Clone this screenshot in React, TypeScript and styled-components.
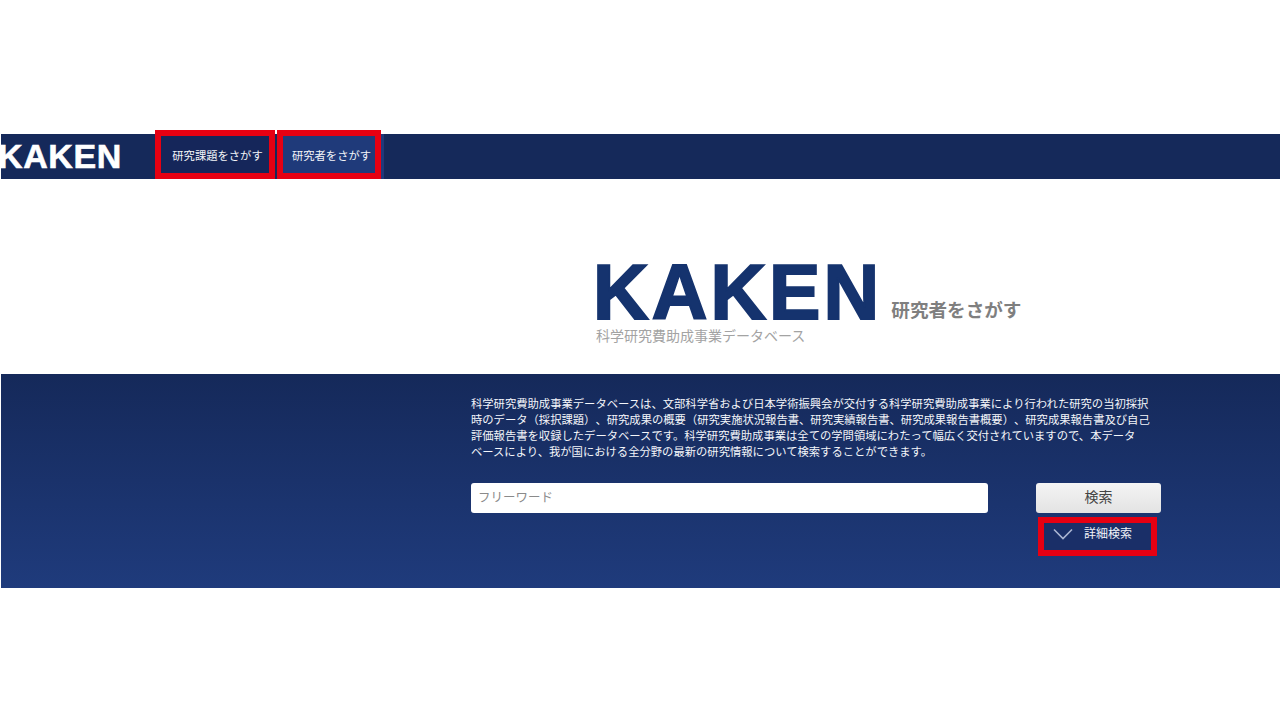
import React from 'react';
import styled, { createGlobalStyle } from 'styled-components';

const GlobalStyle = createGlobalStyle`
  html, body {
    margin: 0;
    padding: 0;
    background: #fff;
  }
  body {
    font-family: "Liberation Sans", "Noto Sans CJK JP", sans-serif;
  }
`;

const Page = styled.div`
  width: 1280px;
  height: 720px;
  padding-top: 134px;
  box-sizing: border-box;
  overflow: hidden;
`;

const Header = styled.header`
  height: 45px;
  margin-left: 1px;
  background: #15295a;
  display: flex;
  align-items: flex-end;
`;

const HeaderLogo = styled.div`
  width: 154px;
  height: 45px;
  overflow: hidden;
  color: #fff;
  font-size: 34px;
  font-weight: 700;
  line-height: 45px;
  letter-spacing: 0.6px;
  text-indent: -3px;
  -webkit-text-stroke: 0.6px #fff;
`;

const NavItem = styled.a<{ $active?: boolean; $width: number }>`
  width: ${(props) => props.$width}px;
  height: 49px;
  box-sizing: border-box;
  border: 6px solid #e60012;
  padding-left: 5px;
  background: ${(props) => (props.$active ? '#1f3a7a' : '#15265a')};
  color: #f2f4f8;
  font-size: 11.3px;
  display: flex;
  align-items: center;
  justify-content: center;
  white-space: nowrap;
  margin-right: 2px;
`;

const NavRest = styled.div`
  width: 3px;
  height: 45px;
  margin-left: -2px;
  background: #20397a;
`;

const Brand = styled.section`
  height: 195px;
  box-sizing: border-box;
  padding: 77px 0 0 596px;
`;

const BrandRow = styled.div`
  display: flex;
  align-items: flex-end;
  height: 71px;
`;

const BrandName = styled.div`
  color: #15336e;
  font-size: 77px;
  font-weight: 700;
  line-height: 72px;
  height: 71px;
  -webkit-text-stroke: 2px #15336e;
  letter-spacing: 3.1px;
  margin-left: -3px;
`;

const BrandSearch = styled.div`
  color: #7f7f7f;
  font-size: 18.6px;
  font-weight: 700;
  line-height: 22px;
  margin: 0 0 5px 9px;
`;

const BrandSub = styled.div`
  color: #a3a3a3;
  font-size: 14px;
  font-weight: 400;
  line-height: 18px;
`;

const Panel = styled.section`
  height: 214px;
  margin-left: 1px;
  box-sizing: border-box;
  padding: 22px 0 0 470px;
  background: linear-gradient(#15295a, #1f3b7c);
`;

const Description = styled.p`
  height: 64px;
  margin: 0;
  color: #f4f6fa;
  font-size: 11.32px;
  line-height: 16px;
  white-space: nowrap;
  text-spacing-trim: space-all;
`;

const SearchRow = styled.div`
  display: flex;
  margin-top: 23px;
`;

const FreeWord = styled.input`
  width: 517px;
  height: 30px;
  box-sizing: border-box;
  border: none;
  border-radius: 3px;
  padding: 0 7px;
  background: #fff;
  font-family: inherit;
  font-size: 12.5px;
  &::placeholder {
    color: #8a8a8a;
  }
`;

const Actions = styled.div`
  margin-left: 48px;
  display: flex;
  flex-direction: column;
  align-items: flex-start;
`;

const SearchButton = styled.button`
  width: 125px;
  height: 30px;
  border: none;
  border-radius: 3px;
  padding: 0 0 4px;
  background: linear-gradient(#f4f4f4, #e3e3e3);
  color: #444;
  font-family: inherit;
  font-size: 14px;
`;

const DetailToggle = styled.div`
  width: 119px;
  height: 39px;
  margin: 4px 0 0 2px;
  box-sizing: border-box;
  border: 6px solid #e60012;
  background: #1a2f68;
  color: #f2f4f8;
  font-size: 12px;
  display: flex;
  align-items: center;
  padding: 0 0 9px 9px;
  gap: 11px;
`;

const Chevron = styled.svg`
  margin-top: 4px;
`;

export default function App() {
  return (
    <Page>
      <GlobalStyle />
      <Header>
        <HeaderLogo>KAKEN</HeaderLogo>
        <NavItem $width={120}>研究課題をさがす</NavItem>
        <NavItem $width={104} $active>
          研究者をさがす
        </NavItem>
        <NavRest />
      </Header>
      <Brand>
        <BrandRow>
          <BrandName>KAKEN</BrandName>
          <BrandSearch>研究者をさがす</BrandSearch>
        </BrandRow>
        <BrandSub>科学研究費助成事業データベース</BrandSub>
      </Brand>
      <Panel>
        <Description>
          科学研究費助成事業データベースは、文部科学省および日本学術振興会が交付する科学研究費助成事業により行われた研究の当初採択
          <br />
          時のデータ（採択課題）、研究成果の概要（研究実施状況報告書、研究実績報告書、研究成果報告書概要）、研究成果報告書及び自己
          <br />
          評価報告書を収録したデータベースです。科学研究費助成事業は全ての学問領域にわたって幅広く交付されていますので、本データ
          <br />
          ベースにより、我が国における全分野の最新の研究情報について検索することができます。
        </Description>
        <SearchRow>
          <FreeWord placeholder="フリーワード" />
          <Actions>
            <SearchButton>検索</SearchButton>
            <DetailToggle>
              <Chevron width="20" height="12" viewBox="0 0 20 12" fill="none">
                <path d="M1 1.5 L10 10.5 L19 1.5" stroke="#aab5d2" strokeWidth="1.6" />
              </Chevron>
              詳細検索
            </DetailToggle>
          </Actions>
        </SearchRow>
      </Panel>
    </Page>
  );
}
